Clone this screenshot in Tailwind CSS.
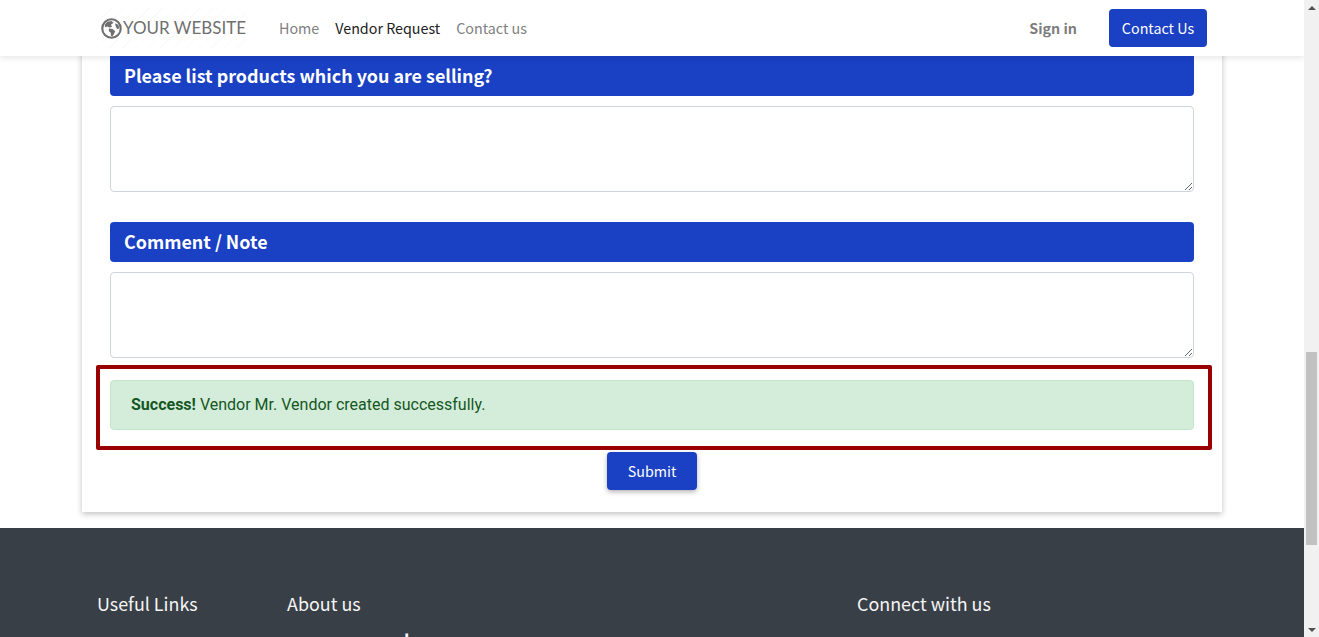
<!DOCTYPE html>
<html lang="en">
<head>
  <meta charset="UTF-8">
  <title>Vendor Request</title>
  <script src="https://cdn.jsdelivr.net/npm/@tailwindcss/browser@4"></script>
</head>
<body class="h-[637px] overflow-hidden bg-white font-['Noto_Sans_CJK_SC','Noto_Sans',sans-serif]">
  <div class="flex h-[637px]">
    <div class="relative w-[1304px] h-[637px] overflow-hidden">

      <!-- Navbar -->
      <nav class="absolute top-0 left-0 z-50 w-full h-14 bg-white shadow-[0_2px_6px_rgba(0,0,0,0.1)] flex items-center pl-[98px] pr-[97px]">
        <a href="#" class="flex items-center w-[148px] h-10 bg-[repeating-linear-gradient(135deg,#fafafa_0,#fafafa_1px,#ffffff_1px,#ffffff_9px)]">
          <svg class="ml-[3px] w-[21px] h-[21px] shrink-0" viewBox="0 0 20 20">
            <circle cx="10" cy="10" r="8.8" fill="none" stroke="#6f6f6f" stroke-width="2"/>
            <path d="M6 3.5 L10 2.8 L12 4.5 L9.5 6.5 L10.5 8.5 L8 9 L6 8 L3.8 8.8 L3.6 6.5 Z M7.5 10 L11 10.5 L13.5 12.5 L12.5 15 L10.8 17.6 L9.5 17 L9.3 14 L7.6 12.5 Z M13.5 5 L16.5 6.5 L17.4 10 L15.5 10.5 L14 8 Z" fill="#6f6f6f"/>
          </svg>
          <span class="ml-px font-['Lato',sans-serif] text-[17px] text-[#6f6f6f] whitespace-nowrap">YOUR WEBSITE</span>
        </a>
        <ul class="flex items-center ml-[33px] gap-4 text-[14.3px]">
          <li><a href="#" class="text-[#808080]">Home</a></li>
          <li><a href="#" class="text-[#212121]">Vendor Request</a></li>
          <li><a href="#" class="text-[#808080]">Contact us</a></li>
        </ul>
        <a href="#" class="ml-auto mr-8 text-[14.3px] font-bold text-[#7d7d7d]">Sign in</a>
        <a href="#" class="flex items-center justify-center w-[98px] h-[38px] rounded bg-[#1a40c4] text-[14.3px] text-white">Contact Us</a>
      </nav>

      <!-- Form card -->
      <main class="mx-[82px] w-[1140px] h-[512px] bg-white shadow-[0_2px_6px_rgba(0,0,0,0.25)] px-[28px] pt-14">
        <h2 class="h-10 flex items-center px-3.5 pb-0.5 rounded-b-sm bg-[#1a40c4] text-[17.9px] font-bold text-white">Please list products which you are selling?</h2>
        <textarea class="block w-full h-[86px] mt-2.5 rounded border border-[#ced4da] bg-white"></textarea>
        <h2 class="h-10 flex items-center px-3.5 pb-0.5 mt-[30px] rounded-sm bg-[#1a40c4] text-[17.9px] font-bold text-white">Comment / Note</h2>
        <textarea class="block w-full h-[86px] mt-2.5 rounded border border-[#ced4da] bg-white"></textarea>

        <div class="-ml-3.5 -mr-[18px] mt-[7px] h-[85px] border-4 border-[#990000] pl-2.5 pr-3.5 pt-[11px] rounded-[2px]">
          <div class="h-[50px] flex items-center px-5 rounded border border-[#c3e6cb] bg-[#d4edda] font-['Roboto',sans-serif] text-base text-[#155724]">
            <strong class="font-bold mr-1">Success!</strong> Vendor Mr. Vendor created successfully.
          </div>
        </div>

        <div class="flex justify-center mt-0.5">
          <button class="w-[90px] h-[38px] rounded bg-[#1a40c4] text-[14.3px] text-white shadow-[0_2px_5px_rgba(0,0,0,0.3)]">Submit</button>
        </div>
      </main>

      <!-- Footer -->
      <footer class="mt-4 h-[200px] bg-[#393f47] pl-[97px] pt-[61px] text-[17.9px] leading-7 text-[#f5f5f5]">
        <div class="flex">
          <h5 class="w-[190px]">Useful Links</h5>
          <div class="w-[570px]">
            <h5>About us</h5>
            <p class="mt-[9px] pl-[117px] font-bold">l</p>
          </div>
          <h5>Connect with us</h5>
        </div>
      </footer>
    </div>

    <!-- Scrollbar -->
    <div class="w-[15px] h-[637px] shrink-0 bg-[#f1f1f1] flex flex-col items-center">
      <div class="h-[15px] flex items-center justify-center">
        <div class="w-0 h-0 border-x-[4px] border-x-transparent border-b-[4px] border-b-[#505050]"></div>
      </div>
      <div class="mt-[337px] w-[11px] h-[193px] bg-[#c1c1c1]"></div>
      <div class="mt-auto h-[15px] flex items-center justify-center">
        <div class="w-0 h-0 border-x-[4px] border-x-transparent border-t-[4px] border-t-[#505050]"></div>
      </div>
    </div>
  </div>
</body>
</html>
